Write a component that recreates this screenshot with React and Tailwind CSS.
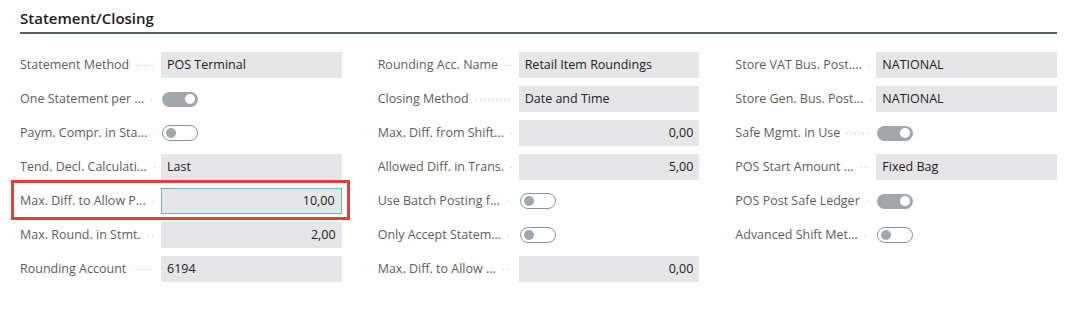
import React from "react";

const cols = [
  [
    { l: "Statement Method", v: "POS Terminal" },
    { l: "One Statement per ...", t: true },
    { l: "Paym. Compr. in Sta...", t: false },
    { l: "Tend. Decl. Calculati...", v: "Last" },
    { l: "Max. Diff. to Allow P...", v: "10,00", n: true, hl: true },
    { l: "Max. Round. in Stmt.", v: "2,00", n: true },
    { l: "Rounding Account", v: "6194" },
  ],
  [
    { l: "Rounding Acc. Name", v: "Retail Item Roundings" },
    { l: "Closing Method", v: "Date and Time" },
    { l: "Max. Diff. from Shift...", v: "0,00", n: true },
    { l: "Allowed Diff. in Trans.", v: "5,00", n: true },
    { l: "Use Batch Posting f...", t: false },
    { l: "Only Accept Statem...", t: false },
    { l: "Max. Diff. to Allow ...", v: "0,00", n: true },
  ],
  [
    { l: "Store VAT Bus. Post....", v: "NATIONAL" },
    { l: "Store Gen. Bus. Post...", v: "NATIONAL" },
    { l: "Safe Mgmt. in Use", t: true },
    { l: "POS Start Amount ...", v: "Fixed Bag" },
    { l: "POS Post Safe Ledger", t: true },
    { l: "Advanced Shift Met...", t: false },
  ],
];

function Toggle({ on }) {
  if (on) {
    return (
      <div className="ml-px flex h-[15px] w-[36px] items-center justify-end rounded-full bg-[#a3a6ad] pr-[3px]">
        <div className="h-[10px] w-[10px] rounded-full bg-white" />
      </div>
    );
  }
  return (
    <div className="ml-px flex h-[16px] w-[36px] items-center rounded-full border border-[#8f939a] bg-white pl-[3px]">
      <div className="h-[10px] w-[10px] rounded-full bg-[#a3a6ad]" />
    </div>
  );
}

function Row({ r }) {
  return (
    <div className="relative flex h-[26px] items-center">
      {r.hl && (
        <div className="pointer-events-none absolute left-[-9px] right-[-8px] top-[-8px] bottom-[-6px] border-[3px] border-[#e0413d]" />
      )}
      <div className="flex w-[141px] shrink-0 items-center overflow-hidden">
        <span className="whitespace-nowrap text-[12.5px] text-[#605e5c]">{r.l}</span>
        <div className="ml-[7px] mr-[8px] h-px min-w-[3px] flex-1 bg-[linear-gradient(to_right,#c8c8c8_1px,transparent_1px)] bg-[length:4px_1px] bg-repeat-x" />
      </div>
      {r.t !== undefined ? (
        <Toggle on={r.t} />
      ) : (
        <div
          className={
            "flex h-[26px] flex-1 items-center px-[6px] text-[12.5px] text-[#212121] " +
            (r.hl ? "border border-[#6cb8b8] bg-[#e6e6e8]" : "bg-[#e6e6e8]") +
            (r.n ? " justify-end" : "")
          }
        >
          {r.v}
        </div>
      )}
    </div>
  );
}

export default function App() {
  return (
    <div
      className="h-[311px] w-[1066px] bg-white pl-[20px] pr-[9px]"
      style={{ fontFamily: "'Open Sans', 'Noto Sans', sans-serif" }}
    >
      <div className="border-b-2 border-[#575e6a] pt-[8px] pb-[4px]">
        <h2 className="text-[15px] font-semibold leading-[20px] text-[#212121]">Statement/Closing</h2>
      </div>
      <div className="mt-[18px] grid grid-cols-3 gap-x-[36px]">
        {cols.map((c, i) => (
          <div key={i} className="flex flex-col gap-[8px]">
            {c.map((r, j) => (
              <Row key={j} r={r} />
            ))}
          </div>
        ))}
      </div>
    </div>
  );
}
